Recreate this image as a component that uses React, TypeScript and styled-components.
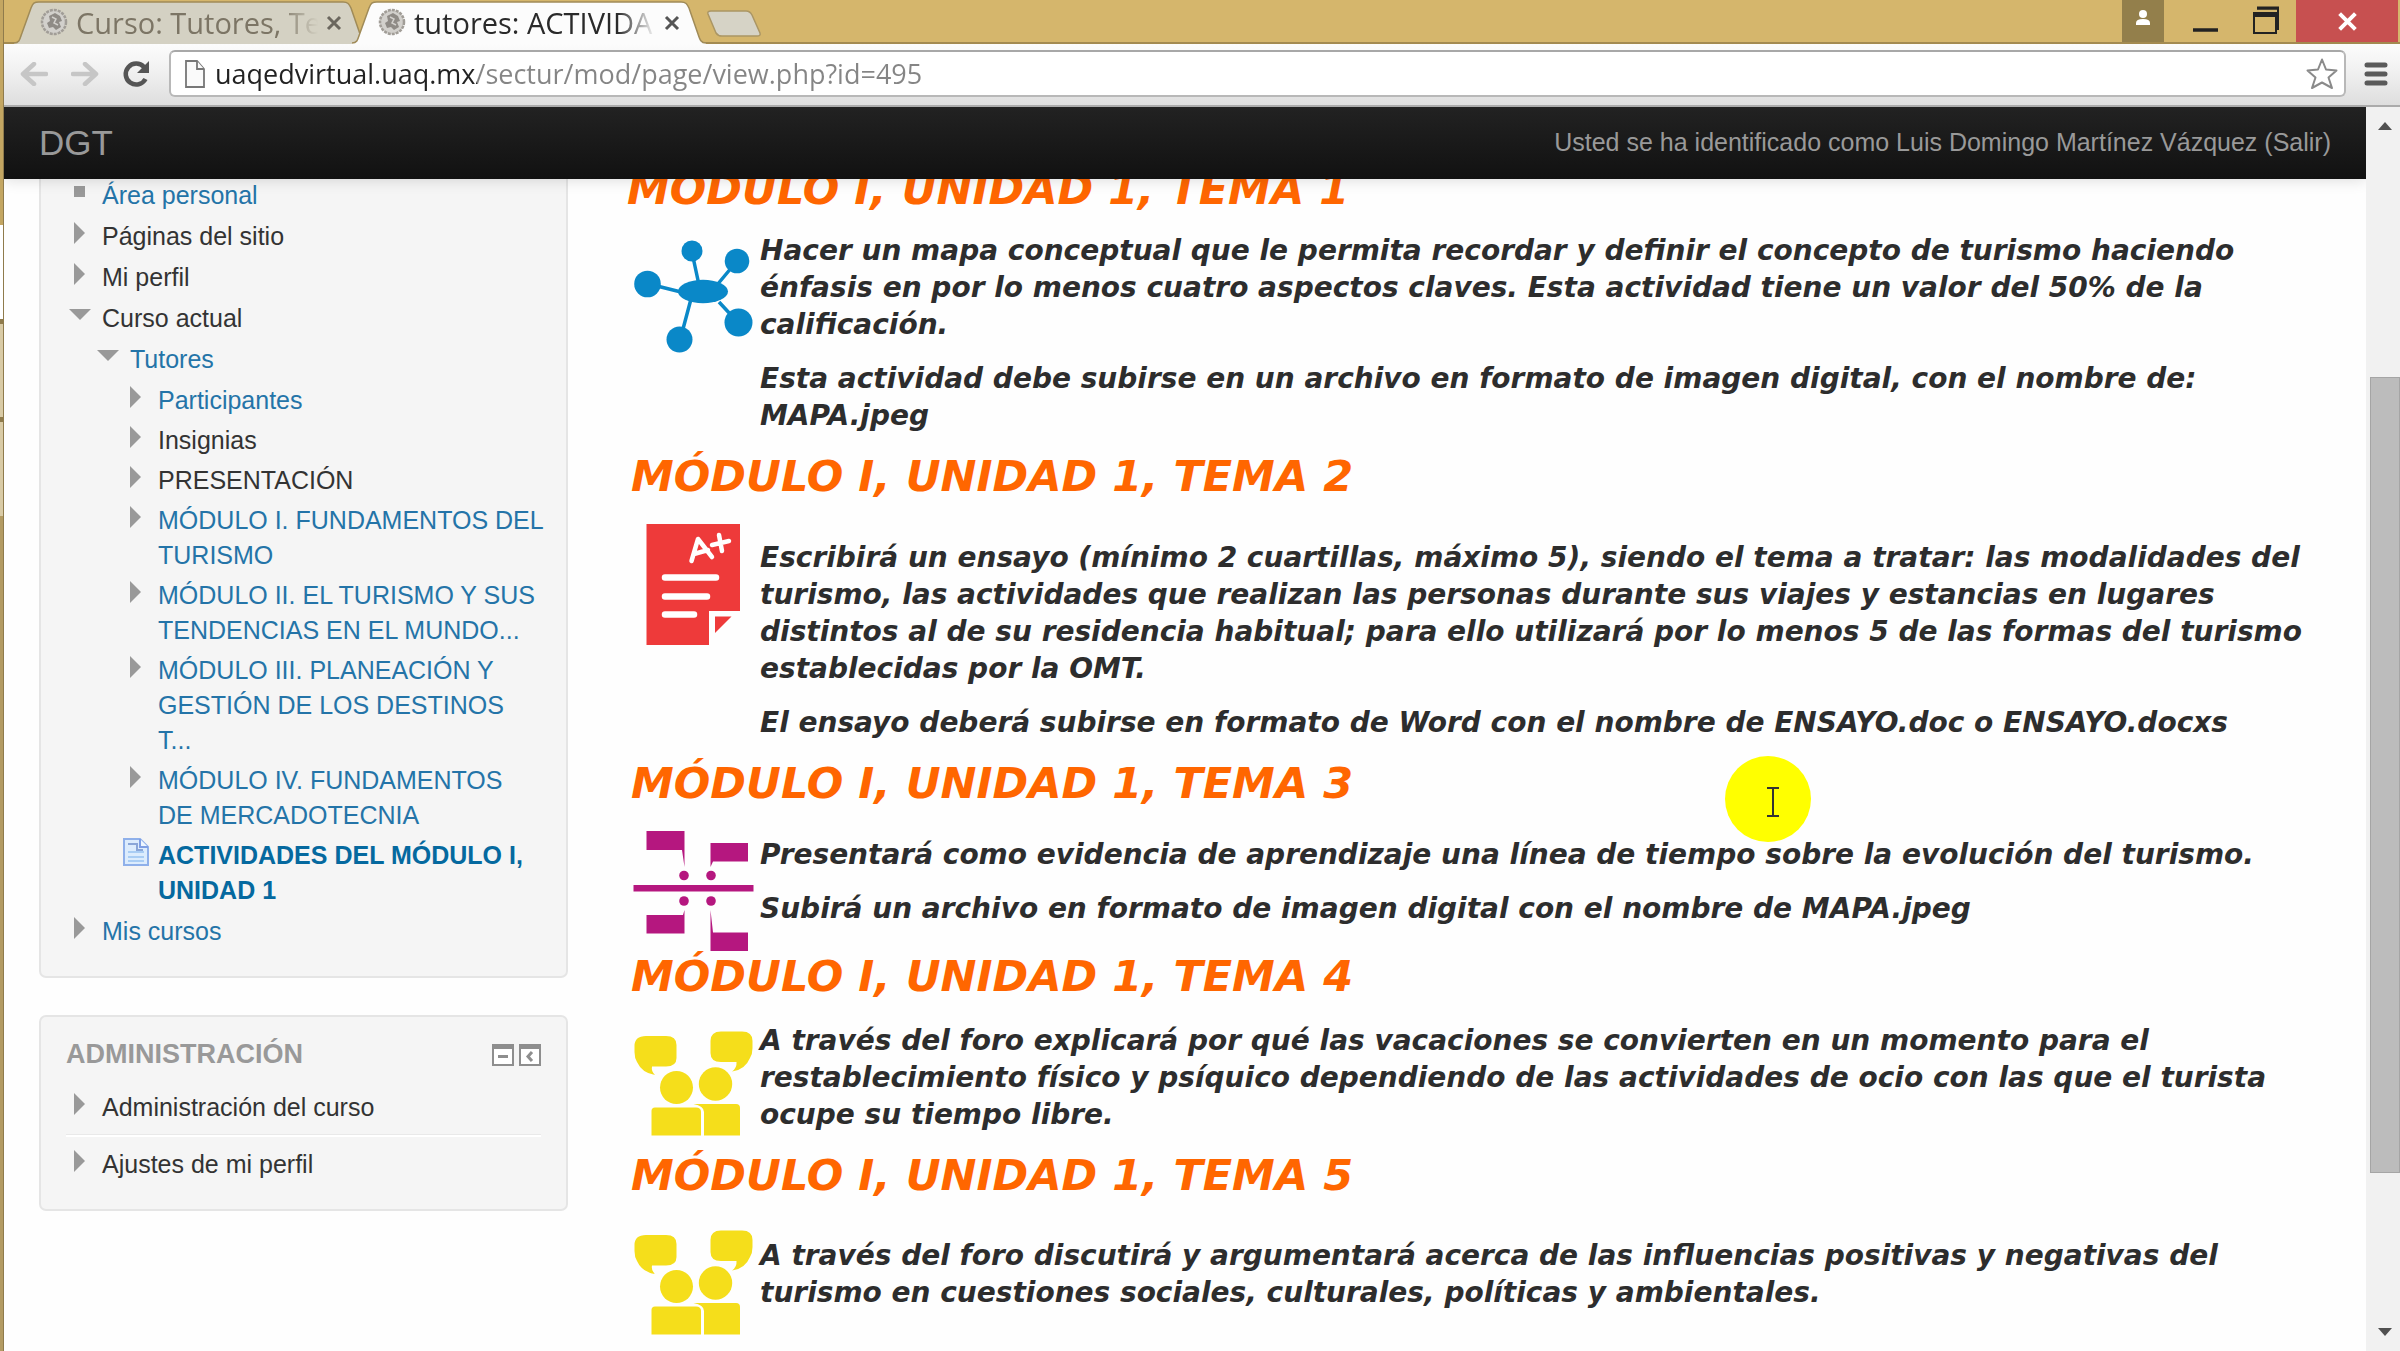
import React from "react";
import styled, { createGlobalStyle, css } from "styled-components";

const GlobalStyle = createGlobalStyle`
  *, *::before, *::after { box-sizing: border-box; }
  body {
    margin: 0;
    overflow: hidden;
    background: #fefefe;
    font-family: "Liberation Sans", Arial, sans-serif;
    font-size: 25px;
    line-height: 35px;
    color: #333;
  }
  button { border: 0; padding: 0; background: none; font: inherit; cursor: pointer; }
  svg { display: block; }
  a { text-decoration: none; color: inherit; }
`;

/* ---------- window frame ---------- */

const Window = styled.div`
  display: flex;
  height: 100vh;
  overflow: hidden;
`;

const DesktopEdge = styled.div`
  flex: none;
  width: 4px;
  border-right: 1px solid #8f7b4c;
  background: linear-gradient(
    #c3a662 0 225px, #fff 225px 319px, #8f7b4c 319px 324px,
    #d9cba6 324px 417px, #8f7b4c 417px 422px, #d9cba6 422px 516px, #b39b63 516px
  );
`;

const Browser = styled.div`
  flex: 1;
  min-width: 0;
  display: flex;
  flex-direction: column;
`;

const TabStrip = styled.div`
  flex: none;
  display: flex;
  height: 44px;
  background: #d5b66c;
  border-bottom: 2px solid #a38a50;
`;

const Tab = styled.div<{ $active?: boolean }>`
  position: relative;
  z-index: ${(p) => (p.$active ? 1 : 0)};
  display: flex;
  align-items: center;
  gap: 8px;
  width: 354px;
  height: 44px;
  padding: 2px 26px 0 26px;
  margin-left: ${(p) => (p.$active ? "-16px" : "10px")};
  color: ${(p) => (p.$active ? "#2a2a2a" : "#7c7565")};
`;

const TabShape = styled.svg`
  position: absolute;
  inset: 0;
  z-index: -1;
  width: 100%;
  height: 100%;
`;

const TabTitle = styled.button`
  flex: 1;
  min-width: 0;
  overflow: hidden;
  white-space: nowrap;
  text-align: left;
  font-family: "Open Sans", "Noto Sans", sans-serif;
  font-size: 29px;
  line-height: 40px;
  color: inherit;
  mask-image: linear-gradient(90deg, #000 84%, transparent);
`;

const TabClose = styled.button`
  width: 16px;
  height: 30px;
  display: grid;
  place-items: center;
`;

const NewTab = styled.button`
  width: 56px;
  height: 44px;
`;

const WindowControls = styled.div`
  display: flex;
  margin-left: auto;
  padding-right: 2px;
`;

const WindowButton = styled.button<{ $kind?: "user" | "close" }>`
  display: grid;
  place-items: center;
  height: 42px;
  width: 60px;
  ${(p) => p.$kind === "user" && css`width: 42px; margin-right: 12px; background: #937f4b;`}
  ${(p) => p.$kind === "close" && css`width: 102px; background: #c75050;`}
`;

const Toolbar = styled.div`
  flex: none;
  display: flex;
  align-items: center;
  height: 63px;
  padding: 0 12px 2px 16px;
  background: linear-gradient(#fcfcfc, #f2f2f2 40%, #dedede);
  border-bottom: 2px solid #ababab;
`;

const ToolButton = styled.button`
  display: grid;
  place-items: center;
  width: 28px;
  height: 32px;
  margin-right: 23px;
`;

const Omnibox = styled.label`
  flex: 1;
  display: flex;
  align-items: center;
  gap: 10px;
  height: 47px;
  margin: 0 18px 0 -4px;
  padding: 0 6px 0 14px;
  background: #fff;
  border: 2px solid #b8b8b8;
  border-top-color: #a8a8a8;
  border-radius: 6px;
`;

const Address = styled.input`
  flex: 1;
  min-width: 0;
  height: 38px;
  border: 0;
  padding: 0;
  outline: 0;
  font-family: "Open Sans", "Noto Sans", sans-serif;
  font-size: 27px;
  color: transparent;
  background: linear-gradient(90deg, #222 262px, #858585 262px);
  background-clip: text;
  -webkit-background-clip: text;
`;

/* ---------- page ---------- */

const Viewport = styled.div`
  flex: 1;
  min-height: 0;
  display: flex;
`;

const Page = styled.div`
  position: relative;
  flex: 1;
  min-width: 0;
  overflow: hidden;
  background: #fefefe;
`;

const Navbar = styled.header`
  position: absolute;
  inset: 0 0 auto 0;
  z-index: 2;
  display: flex;
  align-items: center;
  justify-content: space-between;
  height: 72px;
  padding: 0 35px 2px;
  color: #999;
  background: linear-gradient(#222, #111);
  box-shadow: 0 1px 14px rgba(0, 0, 0, 0.14);
`;

const Brand = styled.a`
  font-size: 35px;
`;

const Columns = styled.div`
  display: grid;
  grid-template-columns: 529px minmax(0, 1fr);
  gap: 59px;
  padding: 0 40px 0 35px;
`;

const Sidebar = styled.aside`
  display: flex;
  flex-direction: column;
  gap: 37px;
`;

const Block = styled.section<{ $scrolled?: boolean }>`
  padding: ${(p) => (p.$scrolled ? "69px" : "20px")} 25px 27px;
  background: #f5f5f5;
  border: 2px solid #e5e5e5;
  border-radius: 7px;
`;

const BlockHeader = styled.div`
  display: flex;
  align-items: center;
  gap: 5px;
  margin-bottom: 18px;
`;

const BlockTitle = styled.h2`
  flex: 1;
  margin: 0;
  font-size: 27px;
  line-height: 35px;
  color: #999;
`;

const Tree = styled.ul<{ $nested?: boolean }>`
  list-style: none;
  margin: 0;
  padding: 0 0 0 ${(p) => (p.$nested ? "28px" : "0")};
`;

const TreeItem = styled.li<{ $tight?: boolean; $ruled?: boolean }>`
  & + li { padding-top: ${(p) => (p.$tight ? "5px" : "6px")}; }
  & > ul { padding-top: 6px; }
  ${(p) => p.$ruled && css`
    & + li { margin-top: 10px; padding-top: 10px; border-top: 2px solid #fff; box-shadow: 0 -1px 0 #e9e9e9; }
  `}
`;

const TreeRow = styled.div`
  display: flex;
  gap: 8px;
`;

const Marker = styled.span`
  flex: none;
  display: grid;
  place-items: center;
  width: 28px;
  height: 28px;
`;

const NodeText = styled.span<{ $current?: boolean }>`
  white-space: pre;
  font-weight: ${(p) => (p.$current ? 700 : 400)};
  a { color: ${(p) => (p.$current ? "#05699f" : "#2474a8")}; }
`;

const Main = styled.main`
  padding-top: 57px;
`;

const Theme = styled.h3<{ $inset: boolean }>`
  margin: 0 0 18px;
  padding-left: ${(p) => (p.$inset ? "4px" : "0")};
  font: italic 700 43px/50px "DejaVu Sans", Verdana, sans-serif;
  color: #ff6600;
`;

const Activity = styled.div`
  display: flex;
  gap: 7px;
  padding-left: 6px;
`;

const Picture = styled.div`
  flex: none;
  width: 120px;
  padding-top: 5px;
`;

const Copy = styled.div<{ $top: number }>`
  flex: 1;
  min-width: 0;
  padding-top: ${(p) => p.$top}px;
`;

const Paragraph = styled.p`
  margin: 0 0 17px;
  white-space: pre;
  font: italic 700 28px/37px "DejaVu Sans", Verdana, sans-serif;
  color: #2d2d2d;
`;

const Scrollbar = styled.div`
  flex: none;
  display: flex;
  flex-direction: column;
  width: 34px;
  background: #f1f1f1;
`;

const ScrollArrow = styled.button`
  display: grid;
  place-items: center;
  flex: none;
  height: 38px;
  padding-left: 4px;
`;

const Track = styled.div`
  flex: 1;
  display: grid;
  grid-template-rows: 232fr 797fr 140fr;
  padding-left: 4px;
`;

const Thumb = styled.div`
  grid-row: 2;
  background: #bcbcbc;
  border: 1px solid #a5a5a5;
`;

const Pointer = styled.svg`
  position: absolute;
  left: 1721px;
  top: 649px;
  z-index: 3;
`;

/* ---------- drawings ---------- */

const Crest = () => (
  <svg width="28" height="30" viewBox="0 0 28 30" aria-hidden="true">
    <circle cx="14" cy="14" r="12" fill="#d2d0cc" stroke="#a19d97" strokeWidth="2.5" strokeDasharray="3 1" />
    <path d="M9 8l6-3 5 3 2 5-3 1 2 5-5 3-3-3-4 1-2-5 3-2z" fill="#8f8b86" />
    <path d="M12 9l4 2-2 4 4 2" stroke="#d2d0cc" fill="none" strokeWidth="1.5" />
  </svg>
);

const Cross = ({ size, color, weight }: { size: number; color: string; weight: number }) => (
  <svg width={size} height={size} viewBox="0 0 16 16" aria-hidden="true">
    <path d="M2 2l12 12M14 2L2 14" stroke={color} strokeWidth={weight} />
  </svg>
);

const TabBack = ({ active }: { active?: boolean }) => (
  <TabShape viewBox="0 0 354 44" preserveAspectRatio="none" aria-hidden="true">
    <path
      d="M0 43C6 43 6 38 8 33L17 8C19 3 20 2 25 2H329C334 2 335 4 337 8L346 34C348 40 349 43 354 43V44H0Z"
      fill={active ? "#fcfcfc" : "#d4d1c3"}
    />
    <path
      d="M0 43C6 43 6 38 8 33L17 8C19 3 20 2 25 2H329C334 2 335 4 337 8L346 34C348 40 349 43 354 43"
      fill="none"
      stroke="#a08b58"
      strokeWidth="1.5"
    />
  </TabShape>
);

const Arrow = ({ flip }: { flip?: boolean }) => (
  <svg width="28" height="24" viewBox="0 0 28 24" aria-hidden="true">
    <path
      d={flip ? "M2 12H24M14 2L25 12L14 22" : "M26 12H4M14 2L3 12L14 22"}
      fill="none"
      stroke="#c6c6c6"
      strokeWidth="4.5"
      strokeLinecap="round"
      strokeLinejoin="round"
    />
  </svg>
);

type MarkerKind = "leaf" | "closed" | "open" | "page";

const MarkerIcon = ({ kind }: { kind: MarkerKind }) => {
  if (kind === "page")
    return (
      <svg width="26" height="28" viewBox="0 0 26 28" aria-hidden="true">
        <path d="M1 1H17L25 9V27H1Z" fill="#dcecfd" stroke="#8fb0ea" strokeWidth="2" />
        <path d="M17 1V9H25" fill="#eef6ff" stroke="#7f9fe4" strokeWidth="2" />
        <path d="M5 6H14V12H20" fill="none" stroke="#8aa6d8" strokeWidth="2" />
        <path d="M5 14H21M5 19H21M5 23H21" stroke="#a9cdf4" strokeWidth="2" />
      </svg>
    );
  return (
    <svg width="22" height="22" viewBox="0 0 22 22" fill="#999" aria-hidden="true">
      {kind === "leaf" && <path d="M5 5H16V16H5Z" />}
      {kind === "closed" && <path d="M5 0L16 11L5 22Z" />}
      {kind === "open" && <path d="M0 5H22L11 16Z" />}
    </svg>
  );
};

const BoxIcon = ({ d }: { d: string }) => (
  <svg width="22" height="22" viewBox="0 0 22 22" fill="none" stroke="#8e8e8e" aria-hidden="true">
    <path d="M1 1H21V21H1Z" strokeWidth="2" fill="#fff" />
    <path d="M1 3H21" strokeWidth="4" />
    <path d={d} strokeWidth="3" />
  </svg>
);

const Art = ({ children }: { children: React.ReactNode }) => (
  <svg width="120" height="120" viewBox="0 0 120 120" overflow="visible" aria-hidden="true">
    {children}
  </svg>
);

const ConceptMap = () => (
  <Art>
    <path d="M60 20L66 48M99 30L84 48M24 49L48 55M50 92L58 62M86 65L99 79" stroke="#0a88c8" strokeWidth="3.5" />
    <g fill="#0a88c8">
      <circle cx="59" cy="14" r="10.5" />
      <circle cx="104" cy="24" r="12.3" />
      <circle cx="14.5" cy="47" r="13.3" />
      <ellipse cx="70" cy="54.5" rx="25" ry="11.7" />
      <circle cx="46.5" cy="102.5" r="13" />
      <circle cx="105.5" cy="85.5" r="14" />
    </g>
  </Art>
);

const Essay = () => (
  <Art>
    <path d="M13.5 0H107V87H76V121H13.5Z" fill="#ee3a3a" />
    <path d="M82 92.5H98.5L82 109Z" fill="#ee3a3a" />
    <g fill="none" stroke="#fff" strokeLinecap="round" strokeLinejoin="round">
      <path d="M32 53.5H83M32 72.5H74M32 90.5H61" strokeWidth="6.5" />
      <path d="M58.5 37L65 15L79 33M61 30L75 26M86 11L89 27M79 21L96 17" strokeWidth="4.5" />
    </g>
  </Art>
);

const Timeline = () => (
  <Art>
    <g fill="#b5177f">
      <path d="M13.5 0H51.5V36L49 19H13.5Z" />
      <path d="M77.5 12H115V30.5H80L77.5 36Z" />
      <path d="M0.5 54H120.5V60.5H0.5Z" />
      <path d="M13.5 102.5V84H50L51.5 79V102.5Z" />
      <path d="M77.5 120V79L80 101.5H115V120Z" />
      <circle cx="51" cy="44.5" r="4.8" />
      <circle cx="78" cy="44.5" r="4.8" />
      <circle cx="51" cy="70" r="4.8" />
      <circle cx="78" cy="70" r="4.8" />
    </g>
  </Art>
);

const Forum = () => (
  <Art>
    <g fill="#f5de1b">
      <path d="M13 12H33Q43.5 12 43.5 21V34Q43.5 42.5 33 42.5H19Q18 47 22 51Q9 49 4 38Q1.5 34 1.5 28V22Q1.5 12 13 12Z" />
      <path d="M88 7.5H109Q119.500 7.500 119.500 17V24Q119.500 30 117 34Q112 46 99 47.5Q104 44 103.5 38H88Q77.5 38 77.500 29V17Q77.5 7.5 88 7.5Z" />
      <circle cx="43.5" cy="63.5" r="16.5" />
      <circle cx="82.5" cy="60" r="16.7" />
      <path d="M22 83.5H63Q68 83.5 68 88V111.5H18.5V87Q18.5 83.5 22 83.5Z" />
      <path d="M60.5 80H103Q107 80 107 84V111.5H71V88Q71 82 60.5 80Z" />
    </g>
  </Art>
);

/* ---------- content ---------- */

type Node = { text: string; kind: MarkerKind; link?: boolean; current?: boolean; children?: Node[] };

const navigation: Node[] = [
  { text: "Área personal", kind: "leaf", link: true },
  { text: "Páginas del sitio", kind: "closed" },
  { text: "Mi perfil", kind: "closed" },
  {
    text: "Curso actual",
    kind: "open",
    children: [
      {
        text: "Tutores",
        kind: "open",
        link: true,
        children: [
          { text: "Participantes", kind: "closed", link: true },
          { text: "Insignias", kind: "closed" },
          { text: "PRESENTACIÓN", kind: "closed" },
          { text: "MÓDULO I. FUNDAMENTOS DEL\nTURISMO", kind: "closed", link: true },
          { text: "MÓDULO II. EL TURISMO Y SUS\nTENDENCIAS EN EL MUNDO...", kind: "closed", link: true },
          { text: "MÓDULO III. PLANEACIÓN Y\nGESTIÓN DE LOS DESTINOS\nT...", kind: "closed", link: true },
          { text: "MÓDULO IV. FUNDAMENTOS\nDE MERCADOTECNIA", kind: "closed", link: true },
          { text: "ACTIVIDADES DEL MÓDULO I,\nUNIDAD 1", kind: "page", link: true, current: true },
        ],
      },
    ],
  },
  { text: "Mis cursos", kind: "closed", link: true },
];

const administration: Node[] = [
  { text: "Administración del curso", kind: "closed" },
  { text: "Ajustes de mi perfil", kind: "closed" },
];

const activities = [
  {
    title: "MÓDULO I, UNIDAD 1, TEMA 1",
    art: <ConceptMap />,
    top: 0,
    text: [
      "Hacer un mapa conceptual que le permita recordar y definir el concepto de turismo haciendo\nénfasis en por lo menos cuatro aspectos claves. Esta actividad tiene un valor del 50% de la\ncalificación.",
      "Esta actividad debe subirse en un archivo en formato de imagen digital, con el nombre de:\nMAPA.jpeg",
    ],
  },
  {
    title: "MÓDULO I, UNIDAD 1, TEMA 2",
    art: <Essay />,
    top: 20,
    text: [
      "Escribirá un ensayo (mínimo 2 cuartillas, máximo 5), siendo el tema a tratar: las modalidades del\nturismo, las actividades que realizan las personas durante sus viajes y estancias en lugares\ndistintos al de su residencia habitual; para ello utilizará por lo menos 5 de las formas del turismo\nestablecidas por la OMT.",
      "El ensayo deberá subirse en formato de Word con el nombre de ENSAYO.doc o ENSAYO.docxs",
    ],
  },
  {
    title: "MÓDULO I, UNIDAD 1, TEMA 3",
    art: <Timeline />,
    top: 10,
    text: [
      "Presentará como evidencia de aprendizaje una línea de tiempo sobre la evolución del turismo.",
      "Subirá un archivo en formato de imagen digital con el nombre de MAPA.jpeg",
    ],
  },
  {
    title: "MÓDULO I, UNIDAD 1, TEMA 4",
    art: <Forum />,
    top: 3,
    text: [
      "A través del foro explicará por qué las vacaciones se convierten en un momento para el\nrestablecimiento físico y psíquico dependiendo de las actividades de ocio con las que el turista\nocupe su tiempo libre.",
    ],
  },
  {
    title: "MÓDULO I, UNIDAD 1, TEMA 5",
    art: <Forum />,
    top: 19,
    text: [
      "A través del foro discutirá y argumentará acerca de las influencias positivas y negativas del\nturismo en cuestiones sociales, culturales, políticas y ambientales.",
    ],
  },
];

const TreeView = ({ nodes, depth = 0, ruled }: { nodes: Node[]; depth?: number; ruled?: boolean }) => (
  <Tree $nested={depth > 0}>
    {nodes.map((node) => (
      <TreeItem key={node.text} $tight={depth === 2} $ruled={ruled}>
        <TreeRow>
          <Marker>
            <MarkerIcon kind={node.kind} />
          </Marker>
          <NodeText $current={node.current}>{node.link ? <a href="#">{node.text}</a> : node.text}</NodeText>
        </TreeRow>
        {node.children && <TreeView nodes={node.children} depth={depth + 1} />}
      </TreeItem>
    ))}
  </Tree>
);

export default function App() {
  return (
    <Window>
      <GlobalStyle />
      <DesktopEdge />
      <Browser>
        <TabStrip>
          <Tab>
            <TabBack />
            <Crest />
            <TabTitle>Curso: Tutores, Te</TabTitle>
            <TabClose aria-label="Cerrar pestaña"><Cross size={16} color="#6b675e" weight={3} /></TabClose>
          </Tab>
          <Tab $active>
            <TabBack active />
            <Crest />
            <TabTitle>tutores: ACTIVIDA</TabTitle>
            <TabClose aria-label="Cerrar pestaña"><Cross size={16} color="#555" weight={3} /></TabClose>
          </Tab>
          <NewTab aria-label="Nueva pestaña">
            <svg width="56" height="44" viewBox="0 0 56 44" aria-hidden="true">
              <path d="M5 11H40Q44 11 46 15L54 33Q55 36 51 36H16Q12 36 10 33L2 14Q1 11 5 11Z" fill="#d6d3c6" stroke="#ab9664" strokeWidth="1.5" />
            </svg>
          </NewTab>
          <WindowControls>
            <WindowButton $kind="user" aria-label="Usuario">
              <svg width="16" height="42" viewBox="0 0 16 42" fill="#fff" aria-hidden="true">
                <circle cx="8" cy="14" r="4" />
                <path d="M1 25V23Q1 19 8 19Q15 19 15 23V25Z" />
              </svg>
            </WindowButton>
            <WindowButton aria-label="Minimizar">
              <svg width="26" height="42" viewBox="0 0 26 42" aria-hidden="true"><path d="M0 30H25" stroke="#222" strokeWidth="3.5" /></svg>
            </WindowButton>
            <WindowButton aria-label="Restaurar">
              <svg width="28" height="42" viewBox="0 0 28 42" fill="none" stroke="#222" aria-hidden="true">
                <path d="M5 8.5H26V30" strokeWidth="2" />
                <path d="M5 8H27" strokeWidth="3" />
                <path d="M2 13H24V33H2Z" strokeWidth="2" />
                <path d="M1 14.5H25" strokeWidth="5" />
              </svg>
            </WindowButton>
            <WindowButton $kind="close" aria-label="Cerrar"><Cross size={21} color="#fff" weight={3} /></WindowButton>
          </WindowControls>
        </TabStrip>

        <Toolbar>
          <ToolButton aria-label="Atrás"><Arrow /></ToolButton>
          <ToolButton aria-label="Adelante"><Arrow flip /></ToolButton>
          <ToolButton aria-label="Recargar">
            <svg width="28" height="28" viewBox="0 0 28 28" fill="none" aria-hidden="true">
              <path d="M22 7A10.500 10.500 0 1 0 23.500 19" stroke="#555" strokeWidth="4.5" />
              <path d="M27 1V13H15Z" fill="#555" />
            </svg>
          </ToolButton>
          <Omnibox>
            <svg width="20" height="28" viewBox="0 0 20 28" fill="#fafafa" stroke="#777" strokeWidth="1.8" aria-hidden="true">
              <path d="M1 1H12L19 9V27H1Z" />
              <path d="M12 1V9H19" />
            </svg>
            <Address aria-label="Dirección" defaultValue="uaqedvirtual.uaq.mx/sectur/mod/page/view.php?id=495" />
            <svg width="32" height="32" viewBox="0 0 32 32" fill="#fff" stroke="#8a8a8a" strokeWidth="2" strokeLinejoin="round" aria-hidden="true">
              <path d="M16 1.500L20 11.500L30.500 12.500L22.500 19.500L26 30L16 24.500L6 30L9.500 19.500L1.500 12.500L12 11.500Z" />
            </svg>
          </Omnibox>
          <button aria-label="Menú">
            <svg width="24" height="24" viewBox="0 0 24 24" stroke="#5a5a5a" strokeWidth="5" strokeLinecap="round" aria-hidden="true">
              <path d="M3 3H21M3 12H21M3 21H21" />
            </svg>
          </button>
        </Toolbar>

        <Viewport>
          <Page>
            <Navbar>
              <Brand href="#">DGT</Brand>
              <span>
                Usted se ha identificado como <a href="#">Luis Domingo Martínez Vázquez</a> (<a href="#">Salir</a>)
              </span>
            </Navbar>
            <Columns>
              <Sidebar>
                <Block $scrolled>
                  <nav aria-label="Navegación"><TreeView nodes={navigation} /></nav>
                </Block>
                <Block>
                  <BlockHeader>
                    <BlockTitle>ADMINISTRACIÓN</BlockTitle>
                    <button aria-label="Ocultar"><BoxIcon d="M6 12.5H16" /></button>
                    <button aria-label="Acoplar"><BoxIcon d="M13 8L9 12.5L13 17" /></button>
                  </BlockHeader>
                  <TreeView nodes={administration} ruled />
                </Block>
              </Sidebar>
              <Main>
                {activities.map((activity, index) => (
                  <section key={activity.title}>
                    <Theme $inset={index > 0}>{activity.title}</Theme>
                    <Activity>
                      <Picture>{activity.art}</Picture>
                      <Copy $top={activity.top}>
                        {activity.text.map((line) => (
                          <Paragraph key={line}>{line}</Paragraph>
                        ))}
                      </Copy>
                    </Activity>
                  </section>
                ))}
              </Main>
            </Columns>
            <Pointer width="86" height="86" viewBox="0 0 86 86" aria-hidden="true">
              <circle cx="43" cy="43" r="43" fill="#ff0" />
              <path d="M42 32H54M42 60H54M48 32V60" stroke="#333" strokeWidth="2" />
            </Pointer>
          </Page>
          <Scrollbar>
            <ScrollArrow aria-label="Subir">
              <svg width="14" height="8" viewBox="0 0 14 8" fill="#505050" aria-hidden="true"><path d="M0 8L7 0L14 8Z" /></svg>
            </ScrollArrow>
            <Track><Thumb /></Track>
            <ScrollArrow aria-label="Bajar">
              <svg width="14" height="8" viewBox="0 0 14 8" fill="#505050" aria-hidden="true"><path d="M0 0H14L7 8Z" /></svg>
            </ScrollArrow>
          </Scrollbar>
        </Viewport>
      </Browser>
    </Window>
  );
}
